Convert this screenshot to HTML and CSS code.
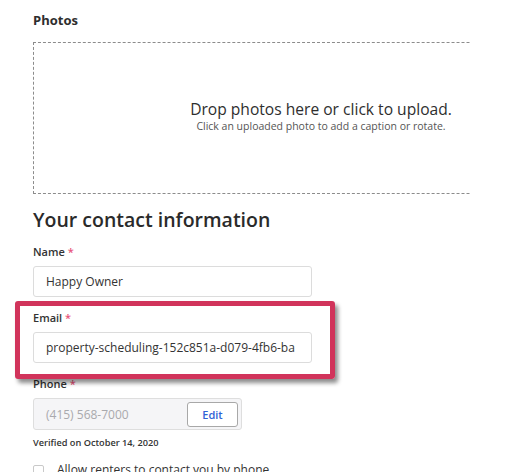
FILE: index.html
```html
<!DOCTYPE html>
<html>
<head>
<meta charset="utf-8">
<link rel="stylesheet" href="styles.css">
</head>
<body>
<div class="page">
  <h3 class="section-label">Photos</h3>
  <div class="dropzone-clip">
    <div class="dropzone">
      <p class="drop-title">Drop photos here or click to upload.</p>
      <p class="drop-sub">Click an uploaded photo to add a caption or rotate.</p>
    </div>
  </div>
  <h2 class="contact-title">Your contact information</h2>
  <div class="field">
    <div class="label">Name <span class="req">*</span></div>
    <div class="input">Happy Owner</div>
  </div>
  <div class="field">
    <div class="label">Email <span class="req">*</span></div>
    <div class="input">property-scheduling-152c851a-d079-4fb6-ba</div>
  </div>
  <div class="field">
    <div class="label">Phone <span class="req">*</span></div>
    <div class="phone-input">
      <span class="placeholder">(415) 568-7000</span>
      <button class="edit-btn">Edit</button>
    </div>
    <p class="verified">Verified on October 14, 2020</p>
  </div>
  <div class="check">
    <span class="box"></span>
    <span class="check-text">Allow renters to contact you by phone</span>
  </div>
  <div class="highlight"></div>
</div>
</body>
</html>
```

FILE: styles.css
```css
* { box-sizing: border-box; }
html, body { margin: 0; padding: 0; background: #fff; }
body {
  font-family: "Open Sans", "Noto Sans", sans-serif;
  color: #333;
  overflow: hidden;
  height: 472px;
}
.page {
  position: relative;
  padding: 11px 0 0 33px;
}
.section-label {
  margin: 0;
  font-size: 13px;
  line-height: 18px;
  font-weight: 700;
  color: #2e2e2e;
}
.dropzone-clip {
  margin-top: 13px;
  width: 437px;
  height: 152px;
  overflow: hidden;
}
.dropzone {
  width: 576px;
  height: 152px;
  border: 1px dashed #8c8c8c;
  display: flex;
  flex-direction: column;
  align-items: center;
  justify-content: center;
  padding-bottom: 4px;
}
.drop-title {
  margin: 0;
  font-size: 15.6px;
  line-height: 20px;
  font-weight: 500;
  color: #2e2e2e;
}
.drop-sub {
  margin: 0;
  font-size: 10.5px;
  line-height: 15px;
  color: #555;
}
.contact-title {
  margin: 12px 0 0;
  font-size: 19.5px;
  line-height: 27px;
  font-weight: 600;
  color: #2a2a2a;
}
.field { margin-top: 11px; }
.field + .field { margin-top: 13px; }
.label {
  font-size: 11px;
  line-height: 15px;
  font-weight: 600;
  color: #333;
  margin-bottom: 7px;
}
.req { color: #e8557a; }
.input {
  width: 279px;
  height: 31px;
  border: 1px solid #dcdcdc;
  border-radius: 3px;
  padding: 0 12px;
  font-size: 12px;
  line-height: 29px;
  color: #333;
  white-space: nowrap;
  overflow: hidden;
}
.phone-input {
  width: 209px;
  height: 32px;
  border: 1px solid #dedede;
  border-radius: 3px;
  background: #f5f5f7;
  display: flex;
  align-items: center;
  justify-content: space-between;
  padding: 0 3px 0 12px;
}
.placeholder {
  font-size: 12px;
  color: #a9a9ad;
}
.edit-btn {
  width: 51px;
  height: 25px;
  border: 1px solid #a8a8a8;
  border-radius: 3px;
  background: #fff;
  font-family: "Open Sans", sans-serif;
  font-size: 11px;
  font-weight: 600;
  color: #2f62d6;
  padding: 0;
}
.verified {
  margin: 6px 0 0;
  font-size: 9.2px;
  line-height: 14px;
  font-weight: 600;
  color: #333;
}
.check {
  margin-top: 12px;
  display: flex;
  align-items: center;
  gap: 13px;
}
.box {
  width: 11px;
  height: 11px;
  border: 1px solid #c9c9c9;
  border-radius: 2px;
}
.check-text {
  font-size: 12px;
  line-height: 16px;
  color: #333;
}
.highlight {
  position: absolute;
  left: 15px;
  top: 301px;
  width: 320px;
  height: 78px;
  border: 5px solid #d1345b;
  border-radius: 3px;
  box-shadow: 3px 4px 4px rgba(0, 0, 0, 0.45);
}
```
